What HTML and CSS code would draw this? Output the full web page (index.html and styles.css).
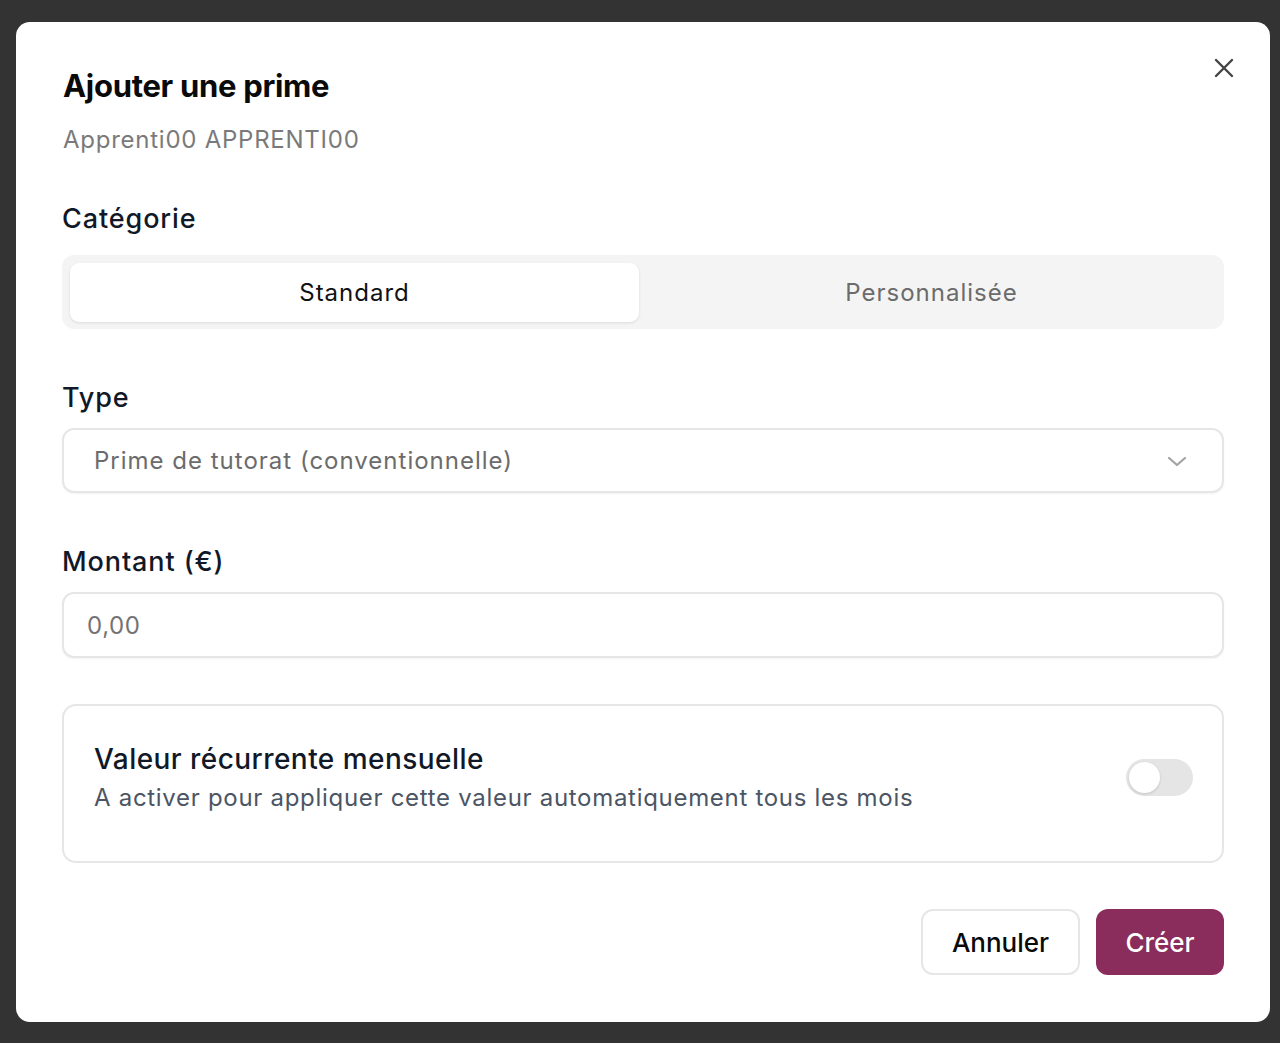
FILE: index.html
```html
<!DOCTYPE html>
<html lang="fr">
<head>
    <meta charset="UTF-8">
    <meta name="viewport" content="width=device-width, initial-scale=1.0">
    <title>Ajouter une prime</title>
    <link rel="stylesheet" href="styles.css">
</head>
<body>
<div class="overlay">
    <div class="modal">
        <button class="close" aria-label="Fermer">
            <svg width="22" height="22" viewBox="0 0 22 22" fill="none" stroke="#444" stroke-width="2.4" stroke-linecap="round">
                <path d="M3 3 L19 19 M19 3 L3 19"/>
            </svg>
        </button>

        <h2 class="title">Ajouter une prime</h2>
        <p class="subtitle">Apprenti00 APPRENTI00</p>

        <div class="field field-cat">
            <label>Catégorie</label>
            <div class="segmented">
                <button class="seg active">Standard</button>
                <button class="seg">Personnalisée</button>
            </div>
        </div>

        <div class="field">
            <label for="type">Type</label>
            <div class="select">
                <span>Prime de tutorat (conventionnelle)</span>
                <svg width="22" height="14" viewBox="0 0 22 14" fill="none" stroke="#a3a3a3" stroke-width="2.2" stroke-linecap="round" stroke-linejoin="round">
                    <path d="M3 4 L11 11 L19 4"/>
                </svg>
            </div>
        </div>

        <div class="field">
            <label for="montant">Montant (€)</label>
            <input type="text" id="montant" placeholder="0,00">
        </div>

        <div class="card">
            <div class="card-text">
                <div class="card-title">Valeur récurrente mensuelle</div>
                <div class="card-desc">A activer pour appliquer cette valeur automatiquement tous les mois</div>
            </div>
            <div class="toggle"><span class="knob"></span></div>
        </div>

        <div class="actions">
            <button class="btn btn-cancel">Annuler</button>
            <button class="btn btn-primary">Créer</button>
        </div>
    </div>
</div>
</body>
</html>
```

FILE: styles.css
```css
* {
    box-sizing: border-box;
}
body {
    margin: 0;
    background-color: #333333;
    font-family: Inter, "Noto Sans", "Liberation Sans", sans-serif;
    color: #0f172a;
}
.overlay {
    padding: 22px 10px 21px 16px;
}
.modal {
    position: relative;
    background-color: #fff;
    border-radius: 14px;
    padding: 46px 46px 47px 46px;
    height: 1000px;
}

/* bouton fermer */
.close {
    position: absolute;
    top: 35px;
    right: 35px;
    background: none;
    border: none;
    padding: 0;
    cursor: pointer;
}

.title {
    margin: 0 0 0 1px;
    font-size: 31px;
    line-height: 36px;
    font-weight: 700;
    letter-spacing: -0.3px;
    color: #0a0a0a;
}
.subtitle {
    margin: 18px 0 0 1px;
    font-size: 24px;
    line-height: 36px;
    color: #7a7a7a;
    letter-spacing: 0.75px;
}

.field {
    margin-top: 52px;
}
.field-cat {
    margin-top: 44px;
}
.field label {
    display: block;
    font-size: 27px;
    line-height: 34px;
    font-weight: 500;
    color: #111827;
    letter-spacing: 0.9px;
    margin-bottom: 13px;
}
.field-cat label {
    margin-bottom: 19px;
}

/* Catégorie */
.segmented {
    display: grid;
    grid-template-columns: 1fr 1fr;
    gap: 8px;
    background-color: #f4f4f4;
    border-radius: 12px;
    padding: 8px 8px 7px 8px;
}
.seg {
    height: 59px;
    border: none;
    border-radius: 9px;
    background: transparent;
    font-family: inherit;
    font-size: 24px;
    letter-spacing: 1px;
    color: #6b6b6b;
    cursor: pointer;
}
.seg.active {
    background-color: #fff;
    color: #111;
    box-shadow: 0 1px 3px rgba(0, 0, 0, 0.1);
}

/* Type */
.select {
    display: flex;
    align-items: center;
    justify-content: space-between;
    height: 65px;
    border: 2px solid #e6e6e6;
    border-radius: 12px;
    padding: 0 34px 0 30px;
    font-size: 24px;
    letter-spacing: 1px;
    color: #6b6b6b;
    box-shadow: 0 1px 2px rgba(0, 0, 0, 0.05);
}

input {
    display: block;
    width: 100%;
    height: 66px;
    border: 2px solid #e6e6e6;
    border-radius: 12px;
    padding: 0 23px;
    font-family: inherit;
    font-size: 24px;
    letter-spacing: 0.6px;
    color: #111;
    box-shadow: 0 1px 2px rgba(0, 0, 0, 0.05);
}
input::placeholder {
    color: #737373;
}

/* Carte récurrente */
.card {
    display: flex;
    align-items: center;
    justify-content: space-between;
    margin-top: 46px;
    height: 159px;
    border: 2px solid #e6e6e6;
    border-radius: 14px;
    padding: 0 29px 12px 30px;
}
.card-title {
    font-size: 28px;
    line-height: 36px;
    font-weight: 500;
    letter-spacing: 0.45px;
    color: #111827;
}
.card-desc {
    margin-top: 5px;
    font-size: 24px;
    line-height: 32px;
    color: #4b5563;
    letter-spacing: 0.7px;
}
.toggle {
    position: relative;
    width: 67px;
    height: 37px;
    border-radius: 19px;
    background-color: #e5e5e5;
}
.knob {
    position: absolute;
    top: 3px;
    left: 3px;
    width: 31px;
    height: 31px;
    border-radius: 50%;
    background-color: #fff;
    box-shadow: 0 1px 3px rgba(0, 0, 0, 0.15);
}

/* Boutons */
.actions {
    display: flex;
    justify-content: flex-end;
    gap: 16px;
    margin-top: 46px;
}
.btn {
    height: 66px;
    border-radius: 12px;
    font-family: inherit;
    font-size: 26px;
    cursor: pointer;
}
.btn-cancel {
    width: 159px;
    background-color: #fff;
    border: 2px solid #e6e6e6;
    color: #0a0a0a;
    font-weight: 500;
}
.btn-primary {
    width: 128px;
    background-color: #8b2d5c;
    border: none;
    color: #fff;
    font-weight: 500;
}
```
